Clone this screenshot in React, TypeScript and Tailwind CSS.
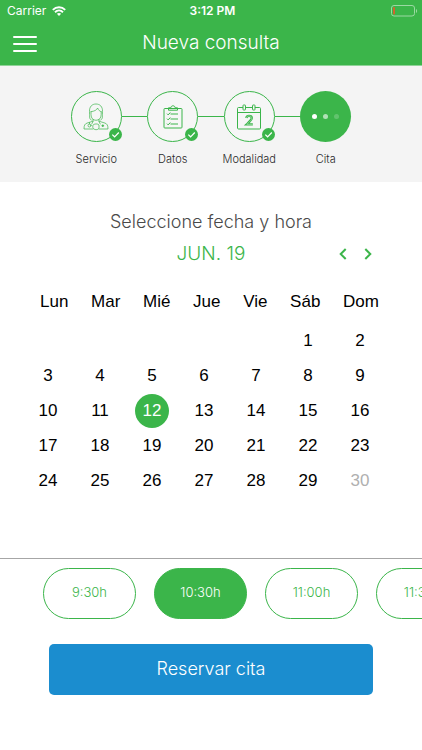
import { useState } from "react";
import type { ReactNode } from "react";

const weekdays = ["Lun", "Mar", "Mié", "Jue", "Vie", "Sáb", "Dom"];

const weeks: (number | null)[][] = [
  [null, null, null, null, null, 1, 2],
  [3, 4, 5, 6, 7, 8, 9],
  [10, 11, 12, 13, 14, 15, 16],
  [17, 18, 19, 20, 21, 22, 23],
  [24, 25, 26, 27, 28, 29, 30],
];

const times = ["9:30h", "10:30h", "11:00h", "11:30h"];

function NurseIcon() {
  return (
    <svg viewBox="0 0 26 28" className="h-7 w-[26px]" fill="none" stroke="currentColor" strokeWidth="0.7" strokeLinecap="round" strokeLinejoin="round" aria-hidden="true">
      <path d="M8.200 17C5.800 16 6.800 12.500 6.500 8.500 6.300 3.700 9 1 13 1s6.700 2.700 6.500 7.500c-.3 4 .7 7.500-1.700 8.500" />
      <path d="M8 8.700C11.500 8.200 13.600 7.200 14.600 5c.9 2.200 2 3.200 3.600 3.700" />
      <path d="M8 8.700v3c0 3.400 2.100 5.600 5 5.600s5.200-2.200 5.200-5.600v-3" />
      <path d="M10 16.500v2.200L8.700 21M16 16.500v2.200l1.300 2.300" />
      <path d="M10 18.200l-6 1.900C2 20.800 1 22.200 1 26h9M16 18.200l6 1.900c2 .7 3 2.100 3 5.900h-9" />
      <path d="M10 22c.8-1.500 5.200-1.500 6 0v3c-.8 2.300-5.200 2.300-6 0z" />
      <path d="M6.500 19.500v1.500" />
      <circle cx="6.500" cy="22.500" r="1.500" />
      <path d="M19.800 21.500v2.600M18.500 22.800h2.600" strokeWidth="1.100" strokeLinecap="butt" />
    </svg>
  );
}

function ClipboardIcon() {
  return (
    <svg viewBox="0 0 20 24" className="h-6 w-5" fill="none" stroke="currentColor" strokeWidth="1" strokeLinejoin="round" aria-hidden="true">
      <rect x="1" y="3.500" width="18" height="19.500" rx="0.800" />
      <path d="M5.500 5.200V2.800h2.300C8 1.500 8.800.8 10 .8s2 .7 2.200 2h2.300v2.400z" />
      <path d="M7.500 9h7.500M7.500 14h7.500M7.500 19h7.500M4 8.700l1.200 1.200L7.300 7.500M4 13.700l1.200 1.200 2.100-2.400M4 18.700l1.200 1.200 2.100-2.400" />
    </svg>
  );
}

function CalendarIcon() {
  return (
    <svg viewBox="0 0 26 26" className="size-[26px]" fill="none" stroke="currentColor" strokeWidth="1" strokeLinejoin="round" aria-hidden="true">
      <path d="M7 3.500H2.500c-.6 0-1 .4-1 1V24c0 .6.400 1 1 1h21c.6 0 1-.4 1-1V4.500c0-.6-.4-1-1-1H19M9.500 3.500h7M1.500 8.500h23" />
      <rect x="7" y="1" width="2.500" height="5" rx="0.600" />
      <rect x="16.500" y="1" width="2.500" height="5" rx="0.600" />
      <path d="M10.300 14c.3-1.500 1.300-2.100 2.700-2.100 1.700 0 2.800.8 2.800 2.200 0 1.600-1.400 2.900-5 6.300h6" strokeWidth="2.400" strokeLinejoin="miter" />
      <path d="M10.300 14c.3-1.500 1.300-2.100 2.700-2.100 1.700 0 2.800.8 2.800 2.200 0 1.600-1.400 2.900-5 6.300h6" stroke="#a8dcaf" strokeWidth="0.700" strokeLinejoin="miter" />
    </svg>
  );
}

function CheckBadge() {
  return (
    <span className="absolute -right-px bottom-0 flex size-[13px] items-center justify-center rounded-full bg-[#3bb54a] text-white">
      <svg viewBox="0 0 13 13" className="size-[13px]" fill="none" stroke="currentColor" strokeWidth="1.200" aria-hidden="true">
        <path d="M3.300 6.600l2.300 2.200 4.200-4.300" />
      </svg>
    </span>
  );
}

const steps: { label: string; icon: ReactNode }[] = [
  { label: "Servicio", icon: <NurseIcon /> },
  { label: "Datos", icon: <ClipboardIcon /> },
  { label: "Modalidad", icon: <CalendarIcon /> },
  { label: "Cita", icon: null },
];

function StatusBar() {
  return (
    <div className="grid h-[22px] grid-cols-3 items-center pr-1 pl-[7px] text-xs text-white">
      <div className="flex items-center gap-1.5">
        <span>Carrier</span>
        <svg viewBox="0 0 14 10" className="h-2.5 w-3.5" fill="none" stroke="currentColor" strokeWidth="1.900" aria-hidden="true">
          <path d="M.8 3.800c3.500-3.500 8.900-3.500 12.400 0M3 6.200c2.300-2.200 5.700-2.200 8 0" />
          <path d="M4.900 7.800c1.300-1.100 2.900-1.100 4.200 0L7 10z" fill="currentColor" stroke="none" />
        </svg>
      </div>
      <span className="text-center font-semibold">3:12 PM</span>
      <svg viewBox="0 0 27 12" className="h-3 w-[27px] justify-self-end" fill="none" aria-hidden="true">
        <rect x="0.500" y="0.500" width="23" height="10.500" rx="2.500" stroke="#9bd9a3" />
        <path d="M25 4v4c1.500-.6 1.500-3.400 0-4z" fill="#9bd9a3" />
        <rect x="2" y="2" width="2" height="7.500" rx="0.800" fill="#d0652f" />
      </svg>
    </div>
  );
}

export default function App() {
  const [day, setDay] = useState(12);
  const [time, setTime] = useState("10:30h");

  return (
    <div className="min-h-screen overflow-hidden bg-white font-['Inter',sans-serif]">
      <header className="border-b border-[#8fd398] bg-[#3bb54a] text-white">
        <StatusBar />
        <div className="grid h-[43px] grid-cols-[1fr_auto_1fr] items-center px-[13px]">
          <button type="button" aria-label="Menú" className="flex w-6 flex-col gap-[5px]">
            <span className="h-0.5 rounded-full bg-white" />
            <span className="h-0.5 rounded-full bg-white" />
            <span className="h-0.5 rounded-full bg-white" />
          </button>
          <h1 className="pb-0.5 text-[19px] leading-6 font-light">Nueva consulta</h1>
        </div>
      </header>

      <nav aria-label="Progreso" className="bg-[#f4f4f4] px-[58px] pt-[25px] pb-[15px]">
        <ol className="grid grid-cols-4">
          {steps.map((step, i) => (
            <li key={step.label} className="flex flex-col items-center gap-[9px]" aria-current={step.icon ? undefined : "step"}>
              <div className="flex w-full items-center">
                <span className={i === 0 ? "h-px flex-1" : "h-px flex-1 bg-[#3bb54a]"} />
                {step.icon ? (
                  <span className="relative flex size-[51px] items-center justify-center rounded-full border border-[#3bb54a] bg-[#f6f6f6] text-[#3bb54a]">
                    {step.icon}
                    <CheckBadge />
                  </span>
                ) : (
                  <span className="flex size-[51px] items-center justify-center gap-[6px] rounded-full bg-[#3bb54a]">
                    <span className="size-[5px] rounded-full bg-white" />
                    <span className="size-[5px] rounded-full bg-white/60" />
                    <span className="size-[5px] rounded-full bg-white/20" />
                  </span>
                )}
                <span className={i === 3 ? "h-px flex-1" : "h-px flex-1 bg-[#3bb54a]"} />
              </div>
              <span className="text-[11px] leading-4 font-light text-[#2a2a2a]">{step.label}</span>
            </li>
          ))}
        </ol>
      </nav>

      <main>
        <section className="pt-7 pb-[60px]">
          <h2 className="text-center text-lg leading-6 font-light text-[#4a4a4a]">Seleccione fecha y hora</h2>
          <div className="mt-1.5 grid grid-cols-[1fr_auto_1fr] items-center px-[42px] text-[#3bb54a]">
            <p className="col-start-2 text-[19px] leading-7 font-light">JUN. 19</p>
            <div className="flex justify-end">
              <button type="button" aria-label="Mes anterior" className="flex h-6 w-[25px] items-center justify-center">
                <svg viewBox="0 0 8 12" className="h-3 w-2" fill="none" stroke="currentColor" strokeWidth="2" aria-hidden="true">
                  <path d="M6.700 1L1.700 6l5 5" />
                </svg>
              </button>
              <button type="button" aria-label="Mes siguiente" className="flex h-6 w-[25px] items-center justify-center">
                <svg viewBox="0 0 8 12" className="h-3 w-2" fill="none" stroke="currentColor" strokeWidth="2" aria-hidden="true">
                  <path d="M1.300 1l5 5-5 5" />
                </svg>
              </button>
            </div>
          </div>

          <table className="mt-4 block font-['Liberation_Sans',Arial,sans-serif] text-[17px] text-black">
            <thead className="block">
              <tr className="flex h-[35px] items-center justify-between pr-[43px] pl-10">
                {weekdays.map((name) => (
                  <th key={name} scope="col" className="p-0 font-normal">
                    {name}
                  </th>
                ))}
              </tr>
            </thead>
            <tbody className="mt-1 block pr-9 pl-[22px]">
              {weeks.map((week, w) => (
                <tr key={w} className="grid h-[35px] grid-cols-7">
                  {week.map((d, i) => (
                    <td key={i} className="flex items-center justify-center p-0">
                      {d !== null && (
                        <button
                          type="button"
                          disabled={d === 30}
                          aria-pressed={d === day}
                          onClick={() => setDay(d)}
                          className={
                            d === day
                              ? "size-[34px] rounded-full bg-[#3bb54a] text-white"
                              : "size-[34px] rounded-full disabled:text-[#b0b0b0]"
                          }
                        >
                          {d}
                        </button>
                      )}
                    </td>
                  ))}
                </tr>
              ))}
            </tbody>
          </table>
        </section>

        <section aria-label="Horas disponibles" className="flex gap-[18px] overflow-x-auto border-t border-[#a6a6a6] pt-[9px] pl-[43px] [scrollbar-width:none]">
          {times.map((t) => (
            <button
              key={t}
              type="button"
              aria-pressed={t === time}
              onClick={() => setTime(t)}
              className={
                t === time
                  ? "h-[51px] w-[93px] shrink-0 rounded-full border border-[#3bb54a] bg-[#3bb54a] pb-0.5 text-[13px] font-light text-white"
                  : "h-[51px] w-[93px] shrink-0 rounded-full border border-[#3bb54a] pb-0.5 text-[13px] font-light text-[#3bb54a]"
              }
            >
              {t}
            </button>
          ))}
        </section>

        <div className="px-[49px] pt-[25px]">
          <button type="button" className="h-[51px] w-full rounded-[5px] bg-[#1b8dcf] pb-0.5 text-lg font-light text-white">
            Reservar cita
          </button>
        </div>
      </main>
    </div>
  );
}
